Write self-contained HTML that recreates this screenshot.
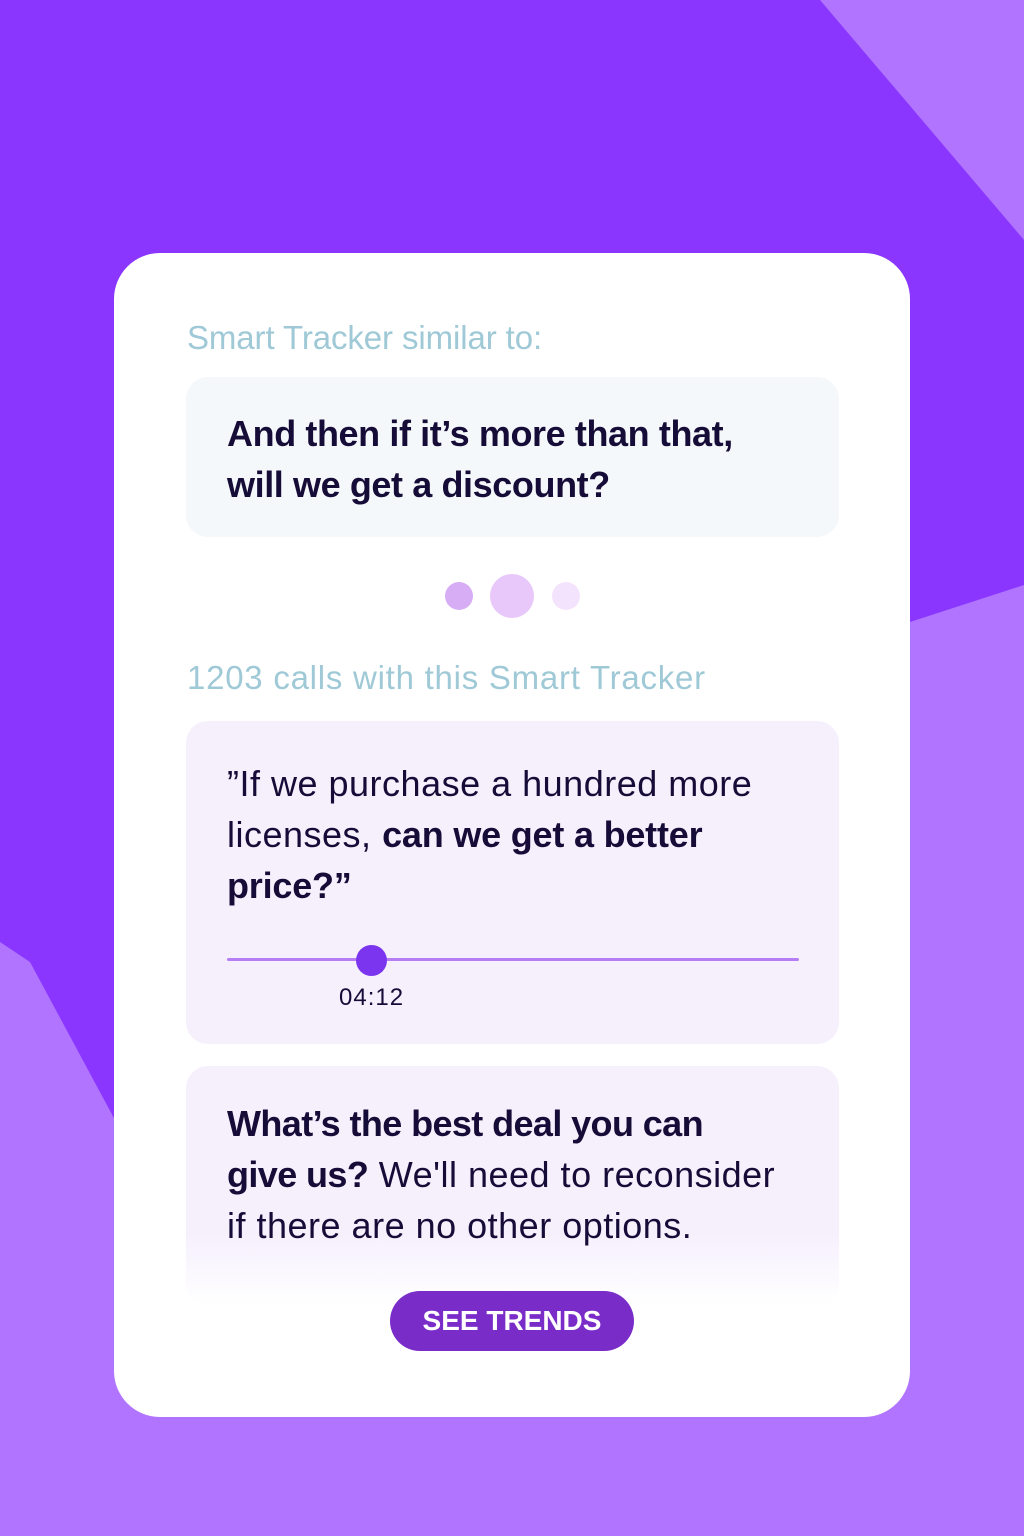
<!DOCTYPE html>
<html><head><meta charset="utf-8"><style>
*{margin:0;padding:0;box-sizing:border-box}
body{width:1024px;height:1536px;position:relative;overflow:hidden;background:#b074ff;font-family:"Liberation Sans",sans-serif}
svg.bg{position:absolute;left:0;top:0}
.card{position:absolute;left:114px;top:253px;width:796px;height:1164px;background:#fff;border-radius:46px}
.h{position:absolute;left:73px;color:#9fc9d6;font-size:33px;white-space:nowrap}
.box{position:absolute;left:72px;width:653px;border-radius:22px}
.t{position:absolute;left:41px;color:#160c38;font-size:36px;line-height:51px;white-space:nowrap;letter-spacing:0.5px}
b{font-weight:700;letter-spacing:-0.2px}
.dot{position:absolute;border-radius:50%}
</style></head><body>
<svg class="bg" width="1024" height="1536"><polygon fill="#8a36ff" points="0,0 820,0 1024,240 1024,585 910,622 910,1120 115,1120 30,962 0,942"/></svg>
<div class="card">
<div class="h" style="top:66px;letter-spacing:-0.1px">Smart Tracker similar to:</div>
<div class="box" style="top:124px;height:160px;background:#f5f8fa">
<div class="t" style="top:31px"><b style="letter-spacing:-0.4px">And then if it’s more than that,<br>will we get a discount?</b></div></div>
<div class="dot" style="left:331px;top:329px;width:28px;height:28px;background:#d7adf6"></div>
<div class="dot" style="left:376px;top:321px;width:44px;height:44px;background:#e8c8fb"></div>
<div class="dot" style="left:438px;top:329px;width:28px;height:28px;background:#f4e3fc"></div>
<div class="h" style="top:406px;letter-spacing:0.75px">1203 calls with this Smart Tracker</div>
<div class="box" style="top:468px;height:323px;background:#f6f0fd">
<div class="t" style="top:37px">”If we purchase a hundred more<br>licenses, <b>can we get a better<br>price?”</b></div>
<div style="position:absolute;left:41px;top:237px;width:572px;height:3px;background:#b57ef5;border-radius:2px"></div>
<div class="dot" style="left:170px;top:224px;width:31px;height:31px;background:#7b35ee"></div>
<div style="position:absolute;left:153px;top:263px;font-size:24px;letter-spacing:1px;color:#160c38">04:12</div>
</div>
<div class="box" style="top:813px;height:240px;background:linear-gradient(#f6f0fd 0%,#f6f0fd 70%,#fff 100%)">
<div class="t" style="top:32px"><b style="letter-spacing:-0.6px">What’s the best deal you can<br>give us?</b> We'll need to reconsider<br>if there are no other options.</div></div>
<div style="position:absolute;left:276px;top:1038px;width:244px;height:60px;border-radius:30px;background:#7a2cc9;color:#fff;font-weight:700;font-size:28px;text-align:center;line-height:60px">SEE TRENDS</div>
</div>
</body></html>
